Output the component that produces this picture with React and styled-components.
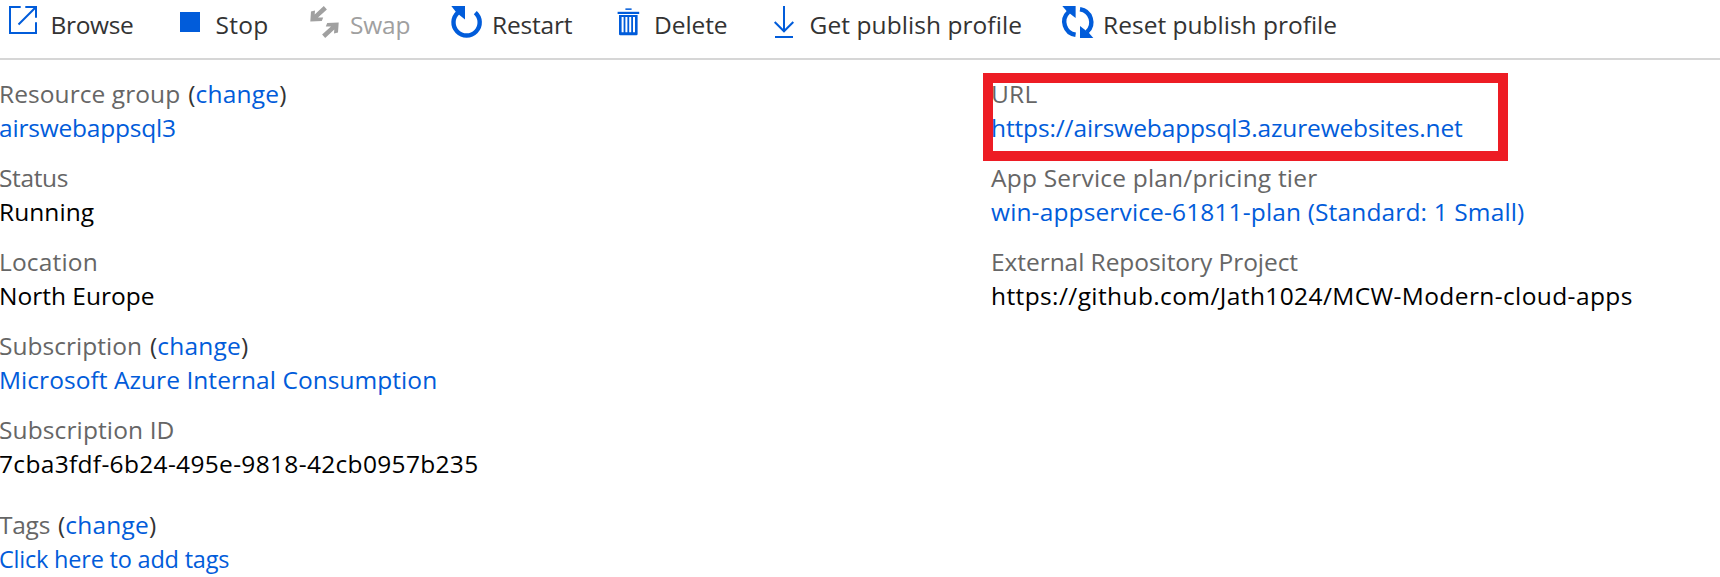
import React from 'react';
import styled, { createGlobalStyle } from 'styled-components';

const GlobalStyle = createGlobalStyle`
  * { box-sizing: border-box; }
  body {
    margin: 0;
    background: #fff;
    overflow: hidden;
    font-family: "Open Sans", "Noto Sans", sans-serif;
    font-size: 24.5px;
    line-height: 34px;
    white-space: nowrap;
  }
`;

const Page = styled.main`
  width: 1720px;
  height: 577px;
  overflow: hidden;
`;

const Toolbar = styled.nav`
  display: flex;
  height: 60px;
  padding: 6px 0 0 9px;
  border-bottom: 2px solid #d6d6d6;
`;

const Command = styled.div`
  display: flex;
  flex: none;
  align-items: flex-start;
  gap: 9.6px;
  width: ${(p) => p.$width}px;
  color: ${(p) => (p.$disabled ? '#a0a0a0' : '#333')};
`;

const Icon = styled.svg`
  flex: none;
  width: 32px;
  height: 32px;
  overflow: visible;
  color: ${(p) => (p.$disabled ? '#a0a0a0' : '#015cda')};
`;

const CommandLabel = styled.span`
  padding-top: 2px;
  letter-spacing: ${(p) => p.$tracking}px;
`;

const Essentials = styled.section`
  display: grid;
  grid-template-columns: 992px 1fr;
  padding-top: 17px;
  margin-left: -1px;
`;

const Column = styled.div`
  display: flex;
  flex-direction: column;
  gap: 16px;
`;

const Field = styled.div`
  position: relative;
  margin-top: ${(p) => (p.$spaced ? 11 : 0)}px;
`;

const Label = styled.div`
  display: flex;
  color: #666;
  letter-spacing: ${(p) => p.$tracking}px;
`;

const Change = styled.span`
  margin-left: 8px;
  color: #333;
  letter-spacing: 0;
`;

const ChangeLink = styled.a`
  color: #015cda;
  letter-spacing: 0.2px;
`;

const Value = styled.div`
  color: ${(p) => (p.$link ? '#015cda' : '#000')};
  font-size: ${(p) => p.$size || 24.5}px;
  letter-spacing: ${(p) => p.$tracking}px;
`;

const Highlight = styled.div`
  position: absolute;
  left: -8px;
  top: -4px;
  width: 525px;
  height: 88px;
  border: 10px solid #ed1c24;
`;

const swapArrow = 'M1.3 15.4L2 5.5L6 4.5L5.7 8.5L14.8 -0.1L17.9 3.5L9 11.4L14.2 11.4L12.8 15Z';

const icons = {
  browse: (
    <g fill="none" stroke="currentColor" strokeWidth="2">
      <path d="M11.7 1H1V27H27V16.3M16.3 1H27V11.7M9.5 18.5L26.5 1.5" />
    </g>
  ),
  stop: <rect x="6" y="6" width="20" height="20" fill="currentColor" />,
  swap: (
    <g fill="currentColor">
      <path d={swapArrow} />
      <path d={swapArrow} transform="rotate(180 15.5 16)" />
    </g>
  ),
  restart: (
    <g>
      <path d="M24.3 6.6A13.1 13.1 0 1 1 6.9 6.6" fill="none" stroke="currentColor" strokeWidth="4.4" />
      <path d="M0.3 0H14V13.5L9 9.6L4.6 5.6Z" fill="currentColor" />
    </g>
  ),
  remove: (
    <g fill="currentColor">
      <rect x="12.4" y="2.4" width="6.2" height="1.5" />
      <rect x="4.6" y="5.8" width="21.6" height="2.2" />
      <path
        fillRule="evenodd"
        d="M6 9H24.6V28Q24.6 29.3 23.3 29.3H7.3Q6 29.3 6 28ZM8.6 11V26.3H10.6V11ZM12.4 11V26.3H14.4V11ZM16.2 11V26.3H18.2V11ZM20 11V26.3H22V11Z"
      />
    </g>
  ),
  download: (
    <path d="M16 0V25M6.7 16L16 25.3L25.3 16M7 31H25" fill="none" stroke="currentColor" strokeWidth="2" />
  ),
  reset: (
    <g>
      {[0, 180].map((angle) => (
        <g key={angle} transform={`rotate(${angle} 15.8 16)`}>
          <path d="M6.6 6A13.2 13.2 0 0 0 13.6 28.8" fill="none" stroke="currentColor" strokeWidth="4.4" />
          <path d="M0.3 0H13.6V12L4.6 5Z" fill="currentColor" />
        </g>
      ))}
    </g>
  ),
};

const commands = [
  { icon: 'browse', label: 'Browse', width: 165, tracking: -0.36 },
  { icon: 'stop', label: 'Stop', width: 134.5, tracking: 0.25 },
  { icon: 'swap', label: 'Swap', width: 142, tracking: -0.2, disabled: true },
  { icon: 'restart', label: 'Restart', width: 162, tracking: -0.22 },
  { icon: 'remove', label: 'Delete', width: 155.5, tracking: -0.1 },
  { icon: 'download', label: 'Get publish profile', width: 293.5, tracking: 0.06 },
  { icon: 'reset', label: 'Reset publish profile', width: 290, tracking: 0 },
];

const leftFields = [
  { label: 'Resource group', lt: 0.07, change: true, value: 'airswebappsql3', vt: -0.2, link: true },
  { label: 'Status', lt: -0.35, value: 'Running', vt: 0.06 },
  { label: 'Location', lt: 0.17, value: 'North Europe', vt: 0 },
  { label: 'Subscription', lt: 0.03, change: true, value: 'Microsoft Azure Internal Consumption', vt: 0.05, link: true },
  { label: 'Subscription ID', lt: 0.12, value: '7cba3fdf-6b24-495e-9818-42cb0957b235', vt: 0.32 },
  { label: 'Tags', lt: -0.25, change: true, value: 'Click here to add tags', vt: -0.21, link: true, size: 23.5, spaced: true },
];

const rightFields = [
  { label: 'URL', lt: 0.2, value: 'https://airswebappsql3.azurewebsites.net', vt: -0.14, link: true, highlight: true },
  { label: 'App Service plan/pricing tier', lt: 0.2, value: 'win-appservice-61811-plan (Standard: 1 Small)', vt: 0.14, link: true },
  { label: 'External Repository Project', lt: -0.06, value: 'https://github.com/Jath1024/MCW-Modern-cloud-apps', vt: 0.39 },
];

function FieldList({ fields }) {
  return (
    <Column>
      {fields.map((f) => (
        <Field key={f.label} $spaced={f.spaced}>
          <Label $tracking={f.lt}>
            {f.label}
            {f.change && (
              <Change>
                (<ChangeLink>change</ChangeLink>)
              </Change>
            )}
          </Label>
          <Value $link={f.link} $tracking={f.vt} $size={f.size}>{f.value}</Value>
          {f.highlight && <Highlight />}
        </Field>
      ))}
    </Column>
  );
}

export default function App() {
  return (
    <Page>
      <GlobalStyle />
      <Toolbar>
        {commands.map((c) => (
          <Command key={c.label} $width={c.width} $disabled={c.disabled}>
            <Icon viewBox="0 0 32 32" $disabled={c.disabled}>{icons[c.icon]}</Icon>
            <CommandLabel $tracking={c.tracking}>{c.label}</CommandLabel>
          </Command>
        ))}
      </Toolbar>
      <Essentials>
        <FieldList fields={leftFields} />
        <FieldList fields={rightFields} />
      </Essentials>
    </Page>
  );
}
